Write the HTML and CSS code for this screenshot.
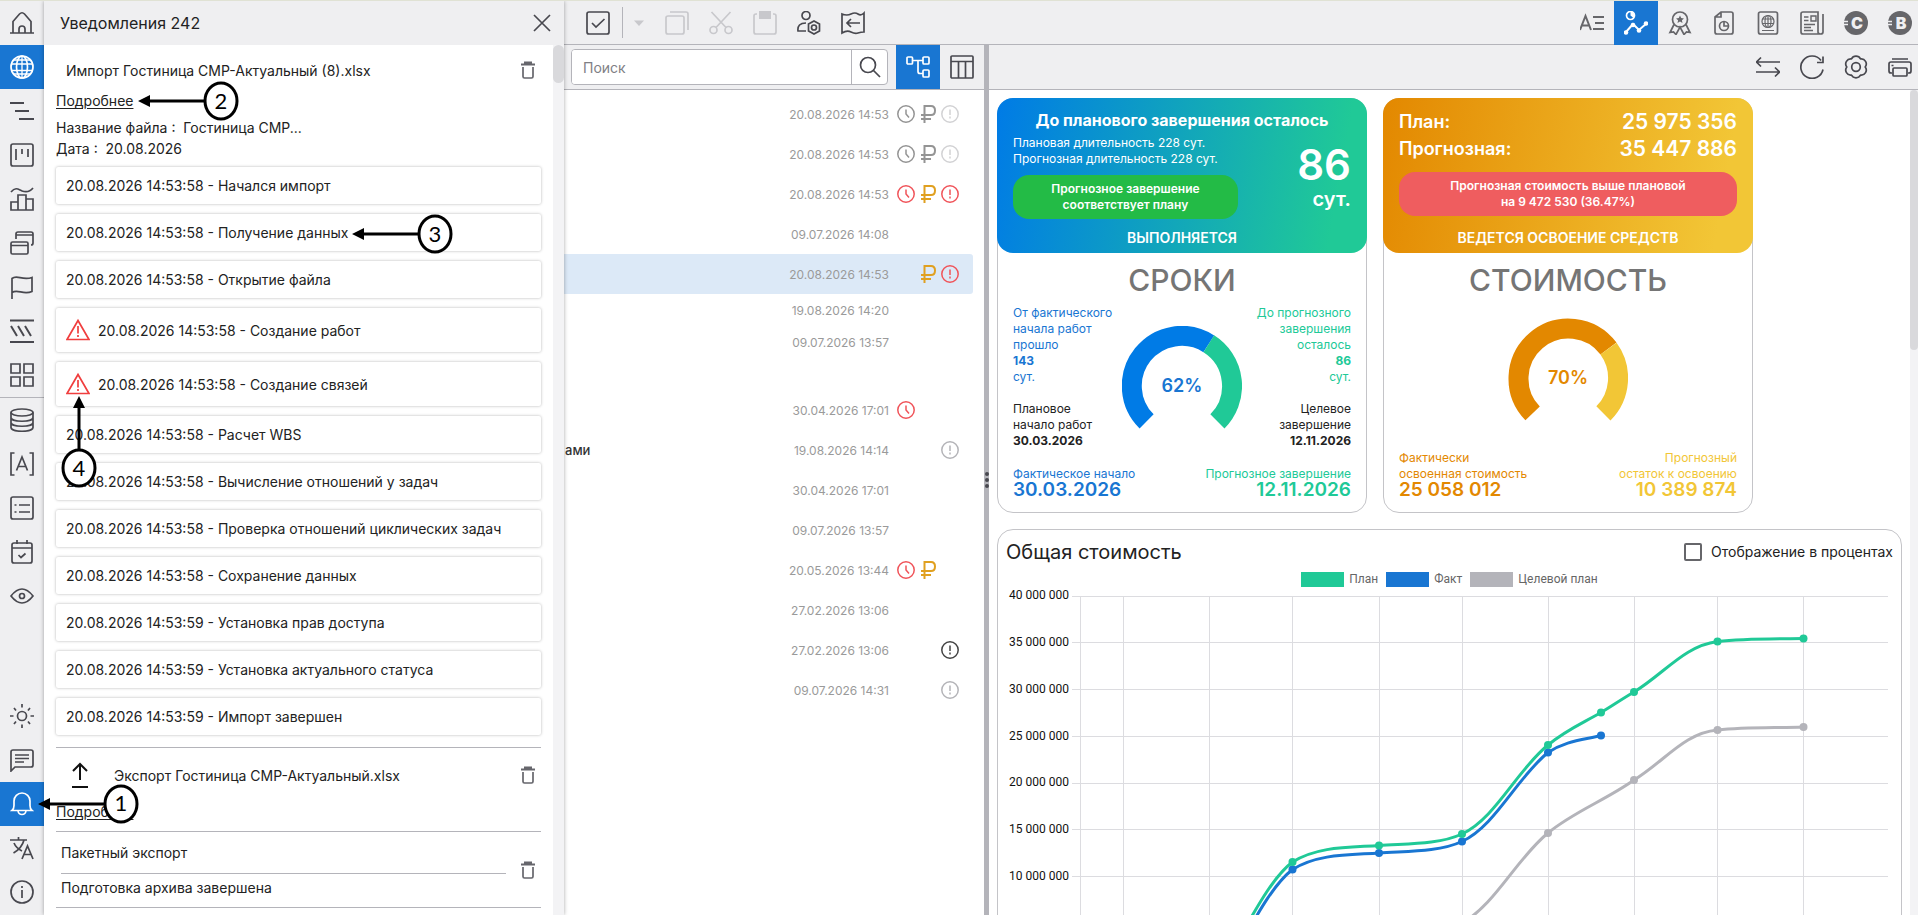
FILE: index.html
```
<!DOCTYPE html>
<html lang="ru">

<head>
    <meta charset="UTF-8">
    <meta name="viewport" content="width=device-width, initial-scale=1.0">
    <title>Уведомления</title>
    <link rel="stylesheet" href="styles.css">
</head>

<body>
    <!-- shared icons -->
    <svg class="sprite" aria-hidden="true">
        <symbol id="trash" viewBox="0 0 18 18">
            <path d="M2 3.5h14M6 3V1.5h6V3" stroke-width="2" />
            <path d="M4 6v9.5q0 1.5 1.5 1.5h7q1.5 0 1.5-1.5V6" />
        </symbol>
        <symbol id="warn" viewBox="0 0 24 24">
            <path d="M12 2.5 23 21.5H1z" />
            <path d="M12 8v7.5M12 17v2" />
        </symbol>
        <symbol id="clock" viewBox="0 0 18 18">
            <circle cx="9" cy="9" r="8.2" />
            <path d="M9 4.5V9l3 3.5" />
        </symbol>
        <symbol id="ruble" viewBox="0 0 18 18">
            <path d="M5.5 18V1H12q4 0 4 4.5T12 10H2M2 14h10" stroke-width="2" />
        </symbol>
        <symbol id="alert" viewBox="0 0 18 18">
            <circle cx="9" cy="9" r="8.2" />
            <path d="M9 4.5v5.5M9 11.5v2" />
        </symbol>
    </svg>

    <nav class="sidebar">
        <button class="nav-btn" aria-label="Главная"><svg class="icon" viewBox="0 0 24 24"><path d="M0 22h24M3 22V10.5L9.5 3q2.5-2.5 5 0L21 10.5V22M9 22v-4a3 3 0 0 1 6 0v4" /></svg></button>
        <button class="nav-btn active" aria-label="Проекты"><svg class="icon" viewBox="0 0 24 24"><circle cx="12" cy="12" r="11" /><ellipse cx="12" cy="12" rx="5.5" ry="11" /><path d="M12 1v22M1.5 9h21M1.5 15.5h21M4 5h16M4 19h16" stroke-width="1.3" /></svg></button>
        <button class="nav-btn" aria-label="График"><svg class="icon" viewBox="0 0 24 24"><path d="M0 4h14M5 12h14M9 20h15" stroke-width="2" /></svg></button>
        <button class="nav-btn" aria-label="Канбан"><svg class="icon" viewBox="0 0 24 24"><rect x="1" y="1" width="22" height="22" rx="2" /><path d="M6 6v11M12 6v5M18 6v8" /></svg></button>
        <button class="nav-btn" aria-label="Гистограмма"><svg class="icon" viewBox="0 0 24 24"><path d="M1 5c5-6 8-2 11-1s7 2 11-3M1 23V15h7v8zM8 23V8h8v15zM16 23V12h7v11z" /></svg></button>
        <button class="nav-btn" aria-label="Окна"><svg class="icon" viewBox="0 0 24 24"><rect x="1" y="11" width="17" height="12" rx="1.5" /><path d="M1 14.5h17M6 8V3q0-2 2-2h13q2 0 2 2v9q0 2-2 2M6 4h17" /></svg></button>
        <button class="nav-btn" aria-label="Вехи"><svg class="icon" viewBox="0 0 24 24"><path d="M2 24V3.5c5-4.5 10 2.5 20-1v14c-9 4-14-3-20 1" /></svg></button>
        <button class="nav-btn" aria-label="Слои"><svg class="icon" viewBox="0 0 24 24"><path d="M0 1.5h24M0 23h24M1 7l6 10M8 7l6 10M15 7l6 10" stroke-width="2" /></svg></button>
        <button class="nav-btn" aria-label="Плитка"><svg class="icon" viewBox="0 0 24 24"><path d="M1 1h9v9H1zM14 1h9v9h-9zM1 14h9v9H1zM14 14h9v9h-9z" /></svg></button>
        <hr class="nav-line">
        <button class="nav-btn" aria-label="База"><svg class="icon" viewBox="0 0 24 24"><ellipse cx="12" cy="4.5" rx="11" ry="3.5" /><path d="M1 4.5v15c0 5 22 5 22 0v-15M1 9.5c0 5 22 5 22 0M1 14.5c0 5 22 5 22 0" /></svg></button>
        <button class="nav-btn" aria-label="Атрибуты"><svg class="icon" viewBox="0 0 24 24"><path d="M4.5 1H1v22h3.5M19.5 1H23v22h-3.5M6.5 18.5 12 5l5.5 13.5M8.5 14.5h7" /></svg></button>
        <button class="nav-btn" aria-label="Список"><svg class="icon" viewBox="0 0 24 24"><rect x="1" y="1" width="22" height="22" rx="2" /><path d="M4.5 9h2M9 9h11M4.5 16h2M9 16h11" /></svg></button>
        <button class="nav-btn" aria-label="Календарь"><svg class="icon" viewBox="0 0 24 24"><rect x="2" y="3" width="20" height="20" rx="2" /><path d="M2 8h20M7 0v4M17 0v4M8.5 15l2.5 2.5 4.5-4" /></svg></button>
        <button class="nav-btn" aria-label="Просмотр"><svg class="icon" viewBox="0 0 24 24"><path d="M1 12q11-14 22 0-11 14-22 0z" /><circle cx="12" cy="12" r="2.5" /></svg></button>
        <div class="nav-space"></div>
        <button class="nav-btn" aria-label="Тема"><svg class="icon" viewBox="0 0 24 24"><circle cx="12" cy="12" r="4.5" /><path d="M12 0v3.5M12 20.5V24M0 12h3.5M20.5 12H24M4 4l2 2.5M20 4l-2 2.5M4 20l2-2.5M20 20l-2-2.5" /></svg></button>
        <button class="nav-btn" aria-label="Чат"><svg class="icon" viewBox="0 0 24 24"><path d="M1 23V4q0-2 2-2h18q2 0 2 2v13q0 2-2 2H5z" /><path d="M5 7h14M5 10.5h14M5 14h9" /></svg></button>
        <button class="nav-btn active" aria-label="Уведомления"><svg class="icon" viewBox="0 0 24 24"><path d="M2 18.5q2-1.5 2-5V9a8 8 0 0 1 16 0v4.5q0 3.5 2 5zM8 18.5a4 4 0 0 0 8 0" /></svg></button>
        <button class="nav-btn" aria-label="Язык"><svg class="icon" viewBox="0 0 24 24"><path d="M0 4h17M8.5 1v3M3.5 17Q12 12 14 4M4 7q2 5 8 8M12 23l5.500-13L23 23M14 18.5h7.5" /></svg></button>
        <button class="nav-btn" aria-label="О программе"><svg class="icon" viewBox="0 0 24 24"><circle cx="12" cy="12" r="11" /><path d="M12 10v8M12 6v2" /></svg></button>
    </nav>

    <aside class="panel">
        <header class="panel-head">
            <h1 class="panel-title">Уведомления 242</h1>
            <button class="close-btn" aria-label="Закрыть"><svg class="icon close-icon" viewBox="0 0 18 18"><path d="M1 1l16 16M17 1 1 17" /></svg></button>
        </header>
        <div class="panel-scroll">
            <div class="panel-list">
                <section class="notice">
                    <div class="notice-row">
                        <span>Импорт Гостиница СМР-Актуальный (8).xlsx</span>
                        <button class="trash-btn" aria-label="Удалить"><svg class="icon"><use href="#trash" /></svg></button>
                    </div>
                    <a class="more" href="#">Подробнее</a>
                    <p class="info first">Название файла : &nbsp;Гостиница СМР...</p>
                    <p class="info">Дата : &nbsp;20.08.2026</p>
                    <ul class="steps">
                        <li>20.08.2026 14:53:58 - Начался импорт</li>
                        <li>20.08.2026 14:53:58 - Получение данных</li>
                        <li>20.08.2026 14:53:58 - Открытие файла</li>
                        <li class="warn"><svg class="icon"><use href="#warn" /></svg>20.08.2026 14:53:58 - Создание работ</li>
                        <li class="warn"><svg class="icon"><use href="#warn" /></svg>20.08.2026 14:53:58 - Создание связей</li>
                        <li>20.08.2026 14:53:58 - Расчет WBS</li>
                        <li>20.08.2026 14:53:58 - Вычисление отношений у задач</li>
                        <li>20.08.2026 14:53:58 - Проверка отношений циклических задач</li>
                        <li>20.08.2026 14:53:58 - Сохранение данных</li>
                        <li>20.08.2026 14:53:59 - Установка прав доступа</li>
                        <li>20.08.2026 14:53:59 - Установка актуального статуса</li>
                        <li>20.08.2026 14:53:59 - Импорт завершен</li>
                    </ul>
                </section>
                <section class="notice export">
                    <div class="notice-row">
                        <svg class="icon upload" viewBox="0 0 28 28"><path d="M14 19V3M7 10l7-7 7 7M6 26h16" /></svg>
                        <span>Экспорт Гостиница СМР-Актуальный.xlsx</span>
                        <button class="trash-btn" aria-label="Удалить"><svg class="icon"><use href="#trash" /></svg></button>
                    </div>
                    <a class="more" href="#">Подробнее</a>
                </section>
                <section class="notice batch">
                    <div class="batch-text">
                        <p class="batch-title">Пакетный экспорт</p>
                        <p class="batch-state">Подготовка архива завершена</p>
                    </div>
                    <button class="trash-btn" aria-label="Удалить"><svg class="icon"><use href="#trash" /></svg></button>
                </section>
                <section class="notice"></section>
            </div>
            <div class="track"><div class="thumb"></div></div>
        </div>
    </aside>

    <main class="main">
        <div class="toolbar">
            <button class="tool-btn" aria-label="Выбрать"><svg class="icon" viewBox="0 0 24 24"><rect x="1" y="1" width="22" height="22" rx="2" /><path d="M6 12l4 4 8.5-8" /></svg></button>
            <span class="tool-line"></span>
            <button class="tool-btn caret" aria-label="Ещё" disabled><svg class="icon" viewBox="0 0 24 24"><path class="fill" d="M7 9.5h10L12 15z" /></svg></button>
            <button class="tool-btn" aria-label="Копировать" disabled><svg class="icon" viewBox="0 0 24 24"><rect x="1" y="5" width="18" height="18" rx="2" /><path d="M5 1h16q2 0 2 2v16" /></svg></button>
            <button class="tool-btn" aria-label="Вырезать" disabled><svg class="icon" viewBox="0 0 24 24"><circle cx="4.5" cy="19" r="3.5" /><circle cx="19.5" cy="19" r="3.5" /><path d="M2.5 1 17 16.5M21.5 1 7 16.5" /></svg></button>
            <button class="tool-btn" aria-label="Вставить" disabled><svg class="icon" viewBox="0 0 24 24"><path d="M4 3H3Q1 3 1 5v16q0 2 2 2h18q2 0 2-2V5q0-2-2-2h-1" /><path class="fill" d="M6 0h12v8H6z" /></svg></button>
            <button class="tool-btn" aria-label="Права"><svg class="icon" viewBox="0 0 24 24"><circle cx="9" cy="4.5" r="4" /><path d="M9 20H1q-1-8 8-8M17 10l5.5 3v7L17 23l-5.5-3v-7z" /><circle cx="17" cy="16.5" r="2.5" /></svg></button>
            <button class="tool-btn" aria-label="Вернуть"><svg class="icon" viewBox="0 0 24 24"><path d="M1 3q5 2 9 0t7 0 6-1v19q-3 0-6 1t-7-1-9 1zM19 12H6M10 8l-4 4 4 4" /></svg></button>
            <div class="toolbar-right">
                <button class="tool-btn soft" aria-label="Текст"><svg class="icon" viewBox="0 0 24 24"><path d="M0 19 5.5 5 11 19M2 14.5h7M13 6h11M15 12h9M13 18h11" stroke-width="2" /></svg></button>
                <button class="tool-btn active" aria-label="Показатели"><svg class="icon" viewBox="0 0 24 24"><circle cx="6.5" cy="4.5" r="4" /><path class="fill" d="M6.5 4.5v-4a4 4 0 0 1 3 6.5z" /><path d="M2 21l7-8 6 6 8-7" stroke-width="2" /><circle class="fill" cx="2" cy="21.5" r="2.3" /><circle class="fill" cx="9" cy="14" r="2.3" /><circle class="fill" cx="15" cy="19.5" r="2.3" /><circle class="fill" cx="22" cy="12.5" r="2.3" /></svg></button>
                <button class="tool-btn soft" aria-label="Награды"><svg class="icon" viewBox="0 0 24 24"><circle cx="12" cy="8.5" r="7.5" /><path d="M6 13.5 2 21.5l3.5-.5L8 23.5l4-7.5 4 7.5 2.5-2.5 3.5.5-4-8" /><path class="fill" d="m12 4.5 1.2 2.6 2.8.3-2.1 1.9.6 2.8-2.5-1.5-2.5 1.5.6-2.8L8 7.400l2.8-.3z" /></svg></button>
                <button class="tool-btn soft" aria-label="Отчёт"><svg class="icon" viewBox="0 0 24 24"><path d="M9 1h10q2 0 2 2v18q0 2-2 2H5q-2 0-2-2V6zM9 1v5H3" /><circle cx="12" cy="15" r="4.5" /><path d="M12 10.5V15h4.5" /></svg></button>
                <button class="tool-btn soft" aria-label="Портал"><svg class="icon" viewBox="0 0 24 24"><rect x="2.5" y="1" width="19" height="22" rx="2" /><path d="M6 19.5h12M6.5 8h11M6.5 12.5h11M12 4.5v12" stroke-width="1.2" /><circle cx="12" cy="10.5" r="6" stroke-width="1.2" /><ellipse cx="12" cy="10.5" rx="3" ry="6" stroke-width="1.2" /></svg></button>
                <button class="tool-btn soft" aria-label="Новости"><svg class="icon" viewBox="0 0 24 24"><path d="M21 23H3q-2 0-2-2V3q0-2 2-2h15v20q0 2 2.5 2t2.5-2V3" /><path d="M11 5h5v5h-5zM4 6h4.5M4 9.5h4.5M4 13.5h11M4 16.5h7M4 19.5h9" stroke-width="1.4" /></svg></button>
                <button class="tool-btn soft" aria-label="C"><svg class="icon" viewBox="0 0 24 24"><circle class="fill" cx="12" cy="12" r="12" /><path class="cut" d="M0 10.5h4M0 13.5h4" /><text class="badge-letter" x="13" y="18">C</text></svg></button>
                <button class="tool-btn soft" aria-label="B"><svg class="icon" viewBox="0 0 24 24"><circle class="fill" cx="12" cy="12" r="12" /><path class="cut" d="M0 10.5h4M0 13.5h4" /><text class="badge-letter" x="13" y="18">B</text></svg></button>
            </div>
        </div>

        <div class="work">
            <section class="projects">
                <div class="subbar">
                    <form class="search">
                        <input class="search-input" type="text" placeholder="Поиск" aria-label="Поиск">
                        <button class="search-btn" type="button" aria-label="Найти"><svg class="icon" viewBox="0 0 24 24"><circle cx="10" cy="10" r="7.5" /><path d="M15.5 15.5 22 22" /></svg></button>
                    </form>
                    <button class="tool-btn active" aria-label="Дерево"><svg class="icon" viewBox="0 0 24 24"><rect x="1" y="2" width="5.5" height="7" rx="1" /><rect x="17" y="2" width="6" height="7" rx="1" /><rect x="17" y="15" width="6" height="7" rx="1" /><path d="M6.5 5.5H17M12 5.5v11q0 2 2 2h3" /></svg></button>
                    <button class="tool-btn" aria-label="Таблица"><svg class="icon" viewBox="0 0 24 24"><rect x="1" y="1" width="22" height="22" rx="1" /><path d="M1 6.5h22M8.5 6.5V23M15.5 6.5V23" /></svg></button>
                </div>
                <ul class="rows">
                    <li class="row"><time>20.08.2026 14:53</time><svg class="st mid"><use href="#clock" /></svg><svg class="st mid"><use href="#ruble" /></svg><svg class="st pale"><use href="#alert" /></svg></li>
                    <li class="row"><time>20.08.2026 14:53</time><svg class="st mid"><use href="#clock" /></svg><svg class="st mid"><use href="#ruble" /></svg><svg class="st pale"><use href="#alert" /></svg></li>
                    <li class="row"><time>20.08.2026 14:53</time><svg class="st red"><use href="#clock" /></svg><svg class="st gold"><use href="#ruble" /></svg><svg class="st red"><use href="#alert" /></svg></li>
                    <li class="row"><time>09.07.2026 14:08</time><i class="st"></i><i class="st"></i><i class="st"></i></li>
                    <li class="row selected"><time>20.08.2026 14:53</time><i class="st"></i><svg class="st gold"><use href="#ruble" /></svg><svg class="st red"><use href="#alert" /></svg></li>
                    <li class="row small"><time>19.08.2026 14:20</time><i class="st"></i><i class="st"></i><i class="st"></i></li>
                    <li class="row small"><time>09.07.2026 13:57</time><i class="st"></i><i class="st"></i><i class="st"></i></li>
                    <li class="row small"></li>
                    <li class="row"><time>30.04.2026 17:01</time><svg class="st red"><use href="#clock" /></svg><i class="st"></i><i class="st"></i></li>
                    <li class="row"><span class="row-name">ами</span><time>19.08.2026 14:14</time><i class="st"></i><i class="st"></i><svg class="st light"><use href="#alert" /></svg></li>
                    <li class="row"><time>30.04.2026 17:01</time><i class="st"></i><i class="st"></i><i class="st"></i></li>
                    <li class="row"><time>09.07.2026 13:57</time><i class="st"></i><i class="st"></i><i class="st"></i></li>
                    <li class="row"><time>20.05.2026 13:44</time><svg class="st red"><use href="#clock" /></svg><svg class="st gold"><use href="#ruble" /></svg><i class="st"></i></li>
                    <li class="row"><time>27.02.2026 13:06</time><i class="st"></i><i class="st"></i><i class="st"></i></li>
                    <li class="row"><time>27.02.2026 13:06</time><i class="st"></i><i class="st"></i><svg class="st dark"><use href="#alert" /></svg></li>
                    <li class="row"><time>09.07.2026 14:31</time><i class="st"></i><i class="st"></i><svg class="st light"><use href="#alert" /></svg></li>
                </ul>
            </section>

            <div class="splitter"><i></i><i></i><i></i></div>

            <section class="dashboard">
                <div class="subbar">
                    <div class="toolbar-right">
                        <button class="tool-btn" aria-label="Обмен"><svg class="icon" viewBox="0 0 24 24"><path d="M24 7H1M5 2.5.5 7 5 11.5M0 17h23M19 12.5l4.5 4.5-4.5 4.5" /></svg></button>
                        <button class="tool-btn" aria-label="Обновить"><svg class="icon" viewBox="0 0 24 24"><path d="M23 14.5A11.2 11.2 0 1 1 21 5.5M23 1.5V7.5h-6" /></svg></button>
                        <button class="tool-btn" aria-label="Настройки"><svg class="icon" viewBox="0 0 24 24"><path d="M7.5 4A5 5 0 0 1 16.5 4A5 5 0 0 1 21.2 12A5 5 0 0 1 16.5 20A5 5 0 0 1 7.5 20A5 5 0 0 1 2.8 12A5 5 0 0 1 7.5 4z" stroke-linejoin="round" /><circle cx="12" cy="12" r="4.3" /></svg></button>
                        <button class="tool-btn" aria-label="Печать"><svg class="icon" viewBox="0 0 24 24"><path d="M4 4h16M4 18H3q-2 0-2-2V9q0-2 2-2h18q2 0 2 2v7q0 2-2 2h-1M3.5 10.5h2" /><rect x="5" y="13" width="14" height="8" rx="1" /></svg></button>
                    </div>
                </div>
                <div class="board">
                    <div class="board-body">
                        <div class="cards">
                            <article class="card">
                                <div class="card-head blue">
                                    <h2 class="head-title">До планового завершения осталось</h2>
                                    <div class="head-cols">
                                        <div class="head-left">
                                            <p class="note">Плановая длительность 228 сут.<br>Прогнозная длительность 228 сут.</p>
                                            <p class="pill green">Прогнозное завершение<br>соответствует плану</p>
                                        </div>
                                        <div class="days"><b>86</b><span>сут.</span></div>
                                    </div>
                                    <p class="status">ВЫПОЛНЯЕТСЯ</p>
                                </div>
                                <h3 class="card-name">СРОКИ</h3>
                                <div class="card-mid">
                                    <div class="side">
                                        <p class="c-blue">От фактического<br>начала работ<br>прошло<br><b>143</b><br>сут.</p>
                                        <p>Плановое<br>начало работ<br><b>30.03.2026</b></p>
                                    </div>
                                    <svg class="gauge" viewBox="0 0 120 120">
                                        <path d="M24.6 95.4A50 50 0 0 1 86.8 17.8" stroke="#007be6" />
                                        <path d="M86.8 17.8A50 50 0 0 1 95.4 95.4" stroke="#20c997" />
                                        <text class="c-blue" x="60" y="66">62%</text>
                                    </svg>
                                    <div class="side right">
                                        <p class="c-green">До прогнозного<br>завершения<br>осталось<br><b>86</b><br>сут.</p>
                                        <p>Целевое<br>завершение<br><b>12.11.2026</b></p>
                                    </div>
                                </div>
                                <div class="card-foot">
                                    <p class="c-blue">Фактическое начало<b>30.03.2026</b></p>
                                    <p class="c-green right">Прогнозное завершение<b>12.11.2026</b></p>
                                </div>
                            </article>

                            <article class="card">
                                <div class="card-head orange">
                                    <dl class="sums">
                                        <div><dt>План:</dt><dd>25 975 356</dd></div>
                                        <div><dt>Прогнозная:</dt><dd>35 447 886</dd></div>
                                    </dl>
                                    <p class="pill coral">Прогнозная стоимость выше плановой<br>на 9 472 530 (36.47%)</p>
                                    <p class="status">ВЕДЕТСЯ ОСВОЕНИЕ СРЕДСТВ</p>
                                </div>
                                <h3 class="card-name">СТОИМОСТЬ</h3>
                                <div class="card-mid single">
                                    <svg class="gauge" viewBox="0 0 120 120">
                                        <path d="M24.6 95.4A50 50 0 1 1 100.5 30.6" stroke="#e38800" />
                                        <path d="M100.5 30.6A50 50 0 0 1 95.4 95.4" stroke="#f2c636" />
                                        <text class="c-orange" x="60" y="66">70%</text>
                                    </svg>
                                </div>
                                <div class="card-foot">
                                    <p class="c-orange">Фактически<br>освоенная стоимость<b>25 058 012</b></p>
                                    <p class="c-yellow right">Прогнозный<br>остаток к освоению<b>10 389 874</b></p>
                                </div>
                            </article>
                        </div>

                        <article class="card chart">
                            <div class="chart-head">
                                <h3 class="chart-title">Общая стоимость</h3>
                                <label class="percent"><input type="checkbox">Отображение в процентах</label>
                            </div>
                            <ul class="legend">
                                <li><i class="key plan"></i>План</li>
                                <li><i class="key fact"></i>Факт</li>
                                <li><i class="key goal"></i>Целевой план</li>
                            </ul>
                            <svg class="plot" viewBox="0 0 903 440">
                                <path class="grid" d="M74 8.5H890M74 54.5H890M74 101.5H890M74 148.5H890M74 195.5H890M74 241.5H890M74 288.5H890M74 335.5H890M74 382.5H890M82.5 8V382M125.5 8V382M211.5 8V382M294.5 8V382M381.5 8V382M464.5 8V382M550.5 8V382M636.5 8V382M719.5 8V382M805.5 8V382" />
                                <g class="axis">
                                    <text x="71" y="11">40 000 000</text>
                                    <text x="71" y="58">35 000 000</text>
                                    <text x="71" y="105">30 000 000</text>
                                    <text x="71" y="152">25 000 000</text>
                                    <text x="71" y="198">20 000 000</text>
                                    <text x="71" y="245">15 000 000</text>
                                    <text x="71" y="292">10 000 000</text>
                                </g>
                                <g class="line goal">
                                    <path d="M381 352C408 350 440 346 464 335C497 317 519 270 550 245C575 224 608 212 636 192C667 173 686 145 719.5 142C747 139 777 140 805.5 139" />
                                    <circle cx="550" cy="245" r="4" /><circle cx="636" cy="192" r="4" /><circle cx="719.5" cy="142" r="4" /><circle cx="805.5" cy="139" r="4" />
                                </g>
                                <g class="line fact">
                                    <path d="M211.5 405C237 375 264 305 294.5 281.5C320 265.5 352 267 381 265C408 263 440 264.5 464 253.5C497 238.5 519 189.5 550 164.5C567 153 584 152 603 147.5" />
                                    <circle cx="294.5" cy="281.5" r="4" /><circle cx="381" cy="265" r="4" /><circle cx="464" cy="253.5" r="4" /><circle cx="550" cy="164.5" r="4" /><circle cx="603" cy="147.5" r="4" />
                                </g>
                                <g class="line plan">
                                    <path d="M211.5 397C237 367 264 297 294.5 274C320 258 352 259.5 381 257.5C408 255.5 440 257 464 246C497 231 519 182 550 157C568 142 583 136 603 124.5C614 118 624 111 636 104C667 85 686 58 719.5 53.5C747 50.5 777 51 805.5 50.5" />
                                    <circle cx="294.5" cy="274" r="4" /><circle cx="381" cy="257.5" r="4" /><circle cx="464" cy="246" r="4" /><circle cx="550" cy="157" r="4" /><circle cx="603" cy="124.5" r="4" /><circle cx="636" cy="104" r="4" /><circle cx="719.5" cy="53.5" r="4" /><circle cx="805.5" cy="50.5" r="4" />
                                </g>
                            </svg>
                        </article>
                    </div>
                    <div class="track wide"><div class="thumb"></div></div>
                </div>
            </section>
        </div>
    </main>

    <!-- callouts over the panel -->
    <svg class="callouts" viewBox="0 0 564 915" width="564" height="915">
        <path d="M104 804H46M204 101H146M418 234H360M79 449V404" />
        <path class="tip" d="M38 804l12-6v12zM138 101l12-6v12zM352 234l12-6v12zM79 396l-6 12h12z" />
        <ellipse cx="121" cy="804" rx="16" ry="18" />
        <ellipse cx="221" cy="101" rx="16" ry="18" />
        <ellipse cx="435" cy="234" rx="16" ry="18" />
        <ellipse cx="79" cy="468" rx="16" ry="18" />
        <text x="121" y="811">1</text>
        <text x="221" y="109">2</text>
        <text x="435" y="242">3</text>
        <text x="79" y="476">4</text>
    </svg>
</body>

</html>
```

FILE: styles.css
```
* {
    box-sizing: border-box;
    margin: 0;
    padding: 0;
}

body {
    --blue: #1976d2;
    --green: #20c997;
    --orange: #e38800;
    --yellow: #f2c636;
    --bar: #efeff1;
    --line: #b4b4ba;
    --ink: #48484f;
    position: relative;
    display: flex;
    height: 100vh;
    overflow: hidden;
    border-top: 1px solid #e0e2d4;
    font-family: Inter, sans-serif;
    font-size: 14px;
    color: #222;
    background: #fff;
}

ul {
    list-style: none;
}

button {
    border: 0;
    background: none;
    font: inherit;
    color: var(--ink);
}

.sprite {
    position: absolute;
    width: 0;
    height: 0;
}

.icon {
    display: block;
    flex: none;
    width: 24px;
    height: 24px;
    fill: none;
    stroke: currentColor;
    stroke-width: 1.7;
}

.icon .fill {
    fill: currentColor;
    stroke: none;
}

/* sidebar */
.sidebar {
    display: flex;
    flex-direction: column;
    flex: none;
    width: 44px;
    padding-bottom: 1px;
    background: var(--bar);
}

.nav-btn,
.tool-btn {
    display: flex;
    align-items: center;
    justify-content: center;
    flex: none;
    width: 44px;
    height: 44px;
}

.nav-line {
    border: 0;
    border-top: 1px solid var(--line);
}

.nav-space {
    flex: 1;
}

.active {
    background: var(--blue);
    color: #fff;
}

/* notifications */
.panel {
    display: flex;
    flex-direction: column;
    flex: none;
    width: 520px;
    background: #fff;
    box-shadow: 0 0 4px rgba(0, 0, 0, .35);
    z-index: 1;
}

.panel-head {
    display: flex;
    align-items: center;
    justify-content: space-between;
    height: 44px;
    flex: none;
    padding: 0 13px 0 16px;
    background: var(--bar);
}

.panel-title {
    font-size: 16px;
    font-weight: 400;
}

.close-icon {
    width: 18px;
    height: 18px;
}

.panel-scroll {
    display: flex;
    flex: 1;
    min-height: 0;
}

.panel-list {
    flex: 1;
    padding: 8px 12px 0;
    overflow: hidden;
}

.track {
    flex: none;
    width: 11px;
    background: #f3f3f5;
}

.track .thumb {
    height: 38px;
    border-radius: 6px;
    background: #d9d9dc;
}

.track.wide {
    width: 8px;
}

.track.wide .thumb {
    height: 260px;
    border-radius: 4px;
}

.notice+.notice {
    border-top: 1px solid var(--line);
}

.notice-row {
    display: flex;
    align-items: center;
    height: 34px;
    padding-left: 10px;
}

.trash-btn {
    margin-left: auto;
    padding: 4px;
}

.trash-btn .icon {
    width: 18px;
    height: 18px;
    color: #66666c;
}

.more {
    display: block;
    width: max-content;
    margin-top: 4px;
    line-height: 20px;
    color: #222;
    text-underline-offset: 2px;
}

.info {
    line-height: 21px;
}

.info.first {
    margin-top: 6px;
}

.steps {
    display: flex;
    flex-direction: column;
    gap: 10px;
    padding: 8px 0 12px;
}

.steps li {
    display: flex;
    align-items: center;
    gap: 8px;
    height: 37px;
    padding: 0 10px;
    border-radius: 2px;
    box-shadow: 0 0 3px rgba(0, 0, 0, .3);
}

.steps .warn {
    height: 44px;
}

.warn .icon {
    color: #f03e3e;
}

.export .notice-row {
    height: 54px;
}

.export .more {
    margin: 0 0 9px;
}

.upload {
    width: 28px;
    height: 28px;
    margin-right: 20px;
    color: #111;
    stroke-width: 2;
}

.batch {
    display: flex;
    align-items: center;
    padding-left: 5px;
}

.batch-text {
    flex: 1;
    padding-bottom: 5px;
}

.batch .trash-btn {
    margin-left: 9px;
}

.batch-title {
    line-height: 41px;
    border-bottom: 1px solid var(--line);
}

.batch-state {
    line-height: 28px;
}

/* toolbars */
.main {
    display: flex;
    flex-direction: column;
    flex: 1;
    min-width: 0;
    overflow: hidden;
}

.toolbar {
    display: flex;
    align-items: center;
    flex: none;
    height: 44px;
    padding-left: 12px;
    background: var(--bar);
    border-bottom: 1px solid var(--line);
}

.toolbar-right {
    display: flex;
    margin-left: auto;
    margin-right: -4px;
}

.tool-line {
    width: 1px;
    height: 31px;
    margin-left: 2px;
    background: var(--line);
}

.tool-btn.caret {
    width: 32px;
}

.tool-btn:disabled {
    color: #c8c8cc;
}

.tool-btn.soft {
    color: #66666a;
}

.cut {
    stroke: var(--bar);
    stroke-width: 1.5;
}

.badge-letter {
    font-size: 16px;
    font-weight: 900;
    text-anchor: middle;
    fill: var(--bar);
    stroke: none;
}

.work {
    display: flex;
    flex: 1;
    min-height: 0;
}

.subbar {
    display: flex;
    align-items: center;
    flex: none;
    height: 45px;
    background: var(--bar);
    border-bottom: 1px solid var(--line);
}

/* project list */
.projects {
    flex: none;
    width: 420px;
}

.search {
    display: flex;
    flex: 1;
    height: 36px;
    margin: 0 8px 0 7px;
    border: 1px solid var(--line);
    border-radius: 4px;
    background: #fff;
    overflow: hidden;
}

.search-input {
    flex: 1;
    min-width: 0;
    padding: 0 11px;
    border: 0;
    font: inherit;
}

.search-input::placeholder {
    color: #808085;
}

.search-btn {
    display: flex;
    align-items: center;
    justify-content: center;
    width: 36px;
    border-left: 1px solid var(--line);
}

.rows {
    padding: 4px 11px 0 0;
}

.row {
    display: flex;
    align-items: center;
    justify-content: flex-end;
    gap: 4px;
    height: 40px;
    padding-right: 14px;
    font-size: 12px;
    color: #9a9a9a;
}

.row.small {
    height: 32px;
}

.row time {
    margin-right: 4px;
}

.row-name {
    flex: 1;
    padding-left: 1px;
    font-size: 13px;
    font-weight: 500;
    color: #333;
}

.selected {
    background: #dce9f7;
    border-radius: 0 3px 3px 0;
}

.st {
    width: 18px;
    height: 18px;
    fill: none;
    stroke: currentColor;
    stroke-width: 1.5;
}

.mid {
    color: #949494;
}

.pale {
    color: #d2d2d4;
}

.light {
    color: #b4b4b8;
}

.dark {
    color: #444;
}

.red {
    color: #f0545a;
}

.gold {
    color: #e0a020;
}

.splitter {
    display: flex;
    flex-direction: column;
    align-items: center;
    justify-content: center;
    gap: 2px;
    flex: none;
    width: 5px;
    background: var(--line);
}

.splitter i {
    width: 4px;
    height: 4px;
    border-radius: 2px;
    background: var(--ink);
}

/* dashboard */
.dashboard {
    display: flex;
    flex-direction: column;
    flex: 1;
    min-width: 0;
}

.board {
    display: flex;
    flex: 1;
    min-height: 0;
}

.board-body {
    flex: 1;
    min-width: 0;
    padding: 8px;
    overflow: hidden;
}

.cards {
    display: flex;
    gap: 16px;
    margin-bottom: 16px;
}

.card {
    display: flex;
    flex-direction: column;
    width: 370px;
    height: 415px;
    border: 1px solid #c4c4c8;
    border-radius: 16px;
    font-size: 12px;
    line-height: 16px;
    color: #222;
}

.card-head {
    display: flex;
    flex-direction: column;
    height: 155px;
    margin: -1px -1px 0;
    padding: 10px 16px 7px;
    border-radius: 16px;
    color: #fff;
}

.blue {
    background: linear-gradient(100deg, #007be6, #20c997 90%);
}

.orange {
    background: linear-gradient(100deg, #e38800, #f2c636 90%);
}

.head-title {
    font-size: 16px;
    line-height: 25px;
    font-weight: 700;
    text-align: center;
}

.head-cols {
    display: flex;
    justify-content: space-between;
    padding-top: 2px;
}

.head-left {
    width: 225px;
}

.pill {
    padding: 6px;
    border-radius: 16px;
    font-weight: 600;
    text-align: center;
}

.green {
    margin-top: 8px;
    background: #23bb46;
}

.coral {
    background: #ef5d5f;
}

.days {
    display: flex;
    flex-direction: column;
    align-items: flex-end;
    font-size: 20px;
    line-height: 24px;
    font-weight: 600;
    padding-top: 8px;
}

.days b {
    font-size: 42px;
    line-height: 44px;
    font-weight: 600;
}

.status {
    margin-top: auto;
    font-size: 14px;
    line-height: 16px;
    font-weight: 600;
    text-align: center;
}

.sums {
    height: 64px;
}

.sums div {
    display: flex;
    justify-content: space-between;
    align-items: center;
    font-size: 18px;
    line-height: 27px;
    font-weight: 600;
}

.sums dd {
    font-size: 21px;
}

.card-name {
    margin-top: 8px;
    font-size: 30px;
    line-height: 38px;
    font-weight: 500;
    text-align: center;
    color: #757575;
}

.card-mid {
    display: flex;
    justify-content: space-between;
    margin-top: 6px;
    padding: 0 15px;
}

.card-mid.single {
    justify-content: center;
}

.side {
    width: 109px;
}

.side p+p {
    margin-top: 16px;
}

.right {
    text-align: right;
}

.gauge {
    flex: none;
    width: 120px;
    height: 120px;
    margin-top: 21px;
    fill: none;
    stroke-width: 20;
}

.single .gauge {
    margin-top: 13px;
}

.gauge text {
    font-size: 18px;
    font-weight: 600;
    text-anchor: middle;
    fill: currentColor;
}

.card-foot {
    display: flex;
    justify-content: space-between;
    margin-top: auto;
    padding: 0 15px 14px;
}

.card-foot b {
    display: block;
    font-size: 19px;
    font-weight: 600;
}

.c-blue {
    color: var(--blue);
}

.c-green {
    color: var(--green);
}

.c-orange {
    color: var(--orange);
}

.c-yellow {
    color: var(--yellow);
}

/* cost chart */
.chart {
    width: auto;
    height: auto;
}

.chart-head {
    display: flex;
    align-items: center;
    justify-content: space-between;
    height: 42px;
    padding: 2px 8px 0;
}

.chart-title {
    font-size: 20px;
    font-weight: 400;
}

.percent {
    display: flex;
    align-items: center;
    gap: 9px;
    font-size: 14px;
}

.percent input {
    appearance: none;
    width: 18px;
    height: 18px;
    border: 2px solid #66666a;
    border-radius: 2px;
}

.legend {
    display: flex;
    justify-content: center;
    gap: 8px;
    padding-bottom: 1px;
    font-family: Roboto, sans-serif;
    line-height: 15px;
    color: #666;
}

.legend li {
    display: flex;
    gap: 5px;
}

.key {
    width: 43px;
    height: 15px;
}

.key.plan {
    background: var(--green);
}

.key.fact {
    background: var(--blue);
}

.key.goal {
    background: var(--line);
}

.plot {
    display: block;
    width: 100%;
}

.grid {
    fill: none;
    stroke: #dcdce0;
}

.axis {
    font-family: Roboto, sans-serif;
    font-size: 12px;
    text-anchor: end;
    fill: #111;
}

.line path {
    fill: none;
    stroke: currentColor;
    stroke-width: 3;
}

.line circle {
    fill: currentColor;
}

.line.plan {
    color: var(--green);
}

.line.fact {
    color: var(--blue);
}

.line.goal {
    color: var(--line);
}

.callouts {
    position: absolute;
    left: 0;
    top: -1px;
    z-index: 2;
    pointer-events: none;
    fill: none;
    stroke: #000;
    stroke-width: 3;
}

.callouts ellipse {
    fill: #fff;
}

.callouts .tip {
    fill: #000;
    stroke: none;
}

.callouts text {
    font-family: Lato, sans-serif;
    font-size: 22px;
    text-anchor: middle;
    fill: #000;
    stroke: none;
}
```
